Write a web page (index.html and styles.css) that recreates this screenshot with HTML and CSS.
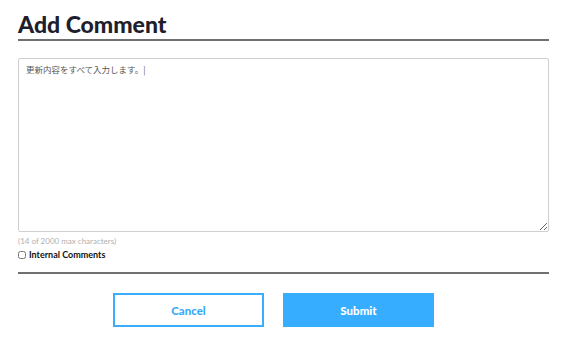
FILE: index.html
```html
<!DOCTYPE html>
<html lang="en">
<head>
    <meta charset="UTF-8">
    <meta name="viewport" content="width=device-width, initial-scale=1.0">
    <title>Add Comment</title>
    <link rel="stylesheet" href="styles.css">
</head>
<body>
    <div class="panel">
        <h2 class="title">Add Comment</h2>
        <form class="comment-form">
            <textarea class="comment-box" rows="8">更新内容をすべて入力します。|</textarea>
            <p class="counter">(14 of 2000 max characters)</p>
            <label class="internal">
                <input type="checkbox">
                <span>Internal Comments</span>
            </label>
            <div class="actions">
                <button type="button" class="btn btn-cancel">Cancel</button>
                <button type="submit" class="btn btn-submit">Submit</button>
            </div>
        </form>
    </div>
</body>
</html>
```

FILE: styles.css
```css
body {
    margin: 0;
    background: #fff;
    font-family: Lato, "Noto Sans", sans-serif;
    color: #222232;
}
.panel {
    padding: 10px 18px 0 18px;
}
.title {
    margin: 0;
    font-size: 23px;
    font-weight: 900;
    line-height: 28px;
    padding-bottom: 1px;
    border-bottom: 2px solid #707070;
    color: #1e1e2d;
}
.comment-form {
    display: flex;
    flex-direction: column;
}
.comment-box {
    margin-top: 17px;
    height: 174px;
    box-sizing: border-box;
    padding: 4px 7px;
    border: 1px solid #cfcfcf;
    border-radius: 2px;
    font-family: "Noto Sans CJK JP", sans-serif;
    font-size: 8.5px;
    color: #555;
    resize: vertical;
}
.counter {
    margin: 4px 0 0 0;
    font-size: 8px;
    color: #b0b0b0;
}
.internal {
    display: flex;
    align-items: center;
    gap: 3px;
    margin-top: 3px;
    font-size: 9px;
    font-weight: 700;
    color: #111;
}
.internal input {
    margin: 0;
    width: 8px;
    height: 8px;
}
.actions {
    margin-top: 12px;
    border-top: 2px solid #707070;
    padding: 19px 0 0 95px;
    display: flex;
    gap: 19px;
}
.btn {
    width: 151px;
    height: 34px;
    font-family: Lato, sans-serif;
    font-size: 11.5px;
    font-weight: 900;
    cursor: pointer;
}
.btn-cancel {
    background: #fff;
    color: #3aa9f5;
    border: 2px solid #3aadff;
}
.btn-submit {
    background: #36adff;
    color: #fff;
    border: none;
}
```
